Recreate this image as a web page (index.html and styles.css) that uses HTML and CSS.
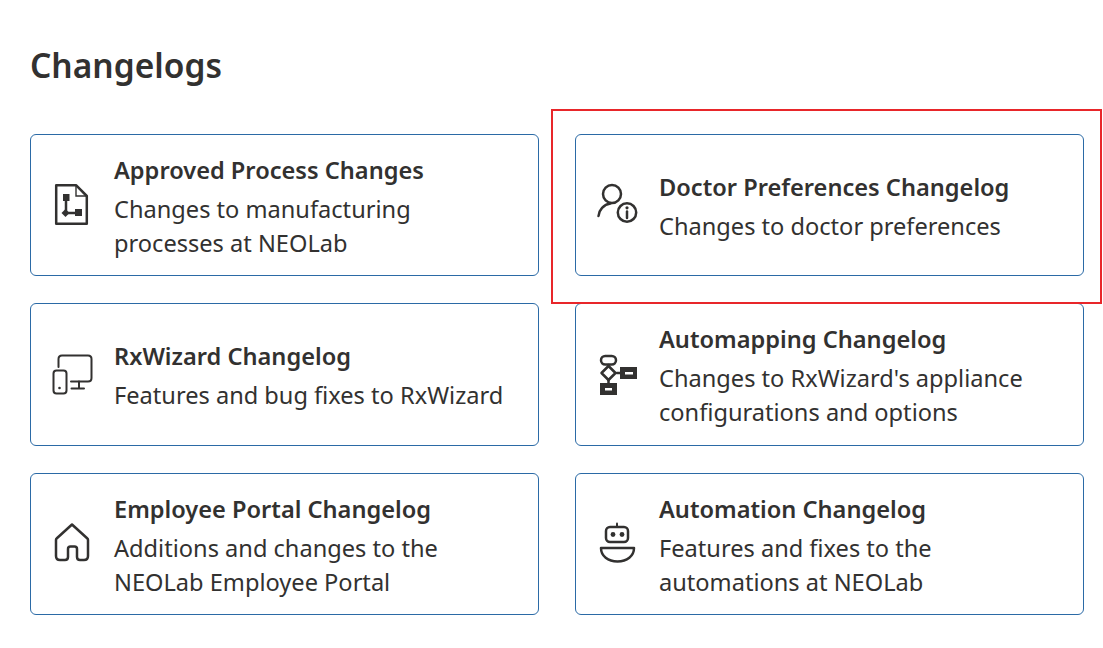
FILE: index.html
```html
<!DOCTYPE html>
<html>
<head>
<meta charset="UTF-8">
<title>Changelogs</title>
<link rel="stylesheet" href="styles.css">
</head>
<body>
	<h1 class="page-title">Changelogs</h1>

	<div class="card-grid">
		<a class="card">
			<svg class="card-icon" viewBox="0 0 42 44">
				<path class="line" d="M5.2 2.2H25L35.8 13V40.8H5.2Z"/>
				<path class="hair" d="M25 3V13H35"/>
				<path class="line" d="M15 16V30H26"/>
				<rect class="fill" x="12" y="11" width="6.5" height="7"/>
				<rect class="fill" x="24" y="26" width="7" height="7"/>
				<path class="fill" d="M14.5 26L18.5 30L14.5 34L10.5 30Z"/>
			</svg>
			<div class="card-text">
				<div class="card-title">Approved Process Changes</div>
				<div class="card-desc">Changes to manufacturing processes at NEOLab</div>
			</div>
		</a>

		<a class="card">
			<svg class="card-icon" viewBox="0 0 42 44">
				<circle class="line" cx="16" cy="11" r="9"/>
				<path class="line" d="M2.5 33C3 27 7.5 21.5 14.5 20.5"/>
				<circle class="line" cx="31" cy="29.5" r="9.2"/>
				<path class="line" d="M31 28.5V35"/>
				<circle class="fill" cx="31" cy="24.8" r="1.6"/>
			</svg>
			<div class="card-text">
				<div class="card-title">Doctor Preferences Changelog</div>
				<div class="card-desc">Changes to doctor preferences</div>
			</div>
		</a>

		<a class="card">
			<svg class="card-icon" viewBox="0 0 42 44">
				<path class="thin" d="M7.5 14V6Q7.5 2.5 11 2.5H37Q40.5 2.5 40.5 6V25Q40.5 28.5 37 28.5H20"/>
				<path class="thin" d="M28 28.5V35M20.5 35.5H33"/>
				<rect class="thin" x="2.5" y="17.5" width="13" height="23" rx="3"/>
				<circle class="fill" cx="8.5" cy="35" r="1.3"/>
			</svg>
			<div class="card-text">
				<div class="card-title">RxWizard Changelog</div>
				<div class="card-desc">Features and bug fixes to RxWizard</div>
			</div>
		</a>

		<a class="card">
			<svg class="card-icon" viewBox="0 0 42 44">
				<rect class="line" x="5" y="3" width="15" height="8.5" rx="4.2"/>
				<path class="line" d="M12.5 12V13M12.5 27V30M21 20H24"/>
				<path class="line" d="M12.5 13L19.5 20L12.5 27L5.5 20Z"/>
				<path class="fill hollow" d="M24 14H41V26H24ZM29 19V21.5H37V19Z"/>
				<path class="fill hollow" d="M4 30H21V42H4ZM9 35V37.5H16V35Z"/>
			</svg>
			<div class="card-text">
				<div class="card-title">Automapping Changelog</div>
				<div class="card-desc">Changes to RxWizard's appliance configurations and options</div>
			</div>
		</a>

		<a class="card">
			<svg class="card-icon" viewBox="0 0 42 44">
				<path class="line" d="M21 2.5L36.4 16.5Q37 17 37 18V34Q37 38 33 38H29Q26 38 26 35V27Q26 24.5 23.5 24.5H19.5Q17 24.5 17 27V35Q17 38 14 38H9Q5 38 5 34V18Q5 17 5.6 16.5Z"/>
			</svg>
			<div class="card-text">
				<div class="card-title">Employee Portal Changelog</div>
				<div class="card-desc">Additions and changes to the NEOLab Employee Portal</div>
			</div>
		</a>

		<a class="card">
			<svg class="card-icon" viewBox="0 0 42 44">
				<path class="thin" d="M21 1.5V4"/>
				<rect class="line" x="10" y="5" width="22" height="15" rx="4"/>
				<circle class="fill" cx="17" cy="12.5" r="2.4"/>
				<circle class="fill" cx="26" cy="12.5" r="2.4"/>
				<path class="line" d="M5 26H38C38 34 31 39.5 21.5 39.5C12 39.5 5 34 5 26Z"/>
			</svg>
			<div class="card-text">
				<div class="card-title">Automation Changelog</div>
				<div class="card-desc">Features and fixes to the automations at NEOLab</div>
			</div>
		</a>
	</div>

	<!-- red box from the annotated screenshot -->
	<div class="highlight"></div>
</body>
</html>
```

FILE: styles.css
```css
body {
	margin: 0;
	padding: 0 19px 0 30px;
	font-family: "Noto Sans", "Open Sans", sans-serif;
	color: #323130;
	background: #fff;
}

.page-title {
	margin: 0;
	padding-top: 41px;
	font-size: 33.5px;
	line-height: 48px;
	font-weight: 600;
}

.card-grid {
	display: grid;
	grid-template-columns: 509px 509px;
	grid-template-rows: 142px 143px 142px;
	column-gap: 36px;
	row-gap: 27px;
	margin-top: 45px;
}

.card {
	display: flex;
	align-items: center;
	gap: 21px;
	padding: 0 20px;
	border: 1px solid #2b6aa6;
	border-radius: 6px;
}

.card-icon {
	flex: none;
	width: 42px;
	height: 44px;
}

.card-icon .line {
	fill: none;
	stroke: #323130;
	stroke-width: 2.5;
	stroke-linejoin: round;
	stroke-linecap: round;
}

.card-icon .thin {
	fill: none;
	stroke: #323130;
	stroke-width: 2;
	stroke-linecap: round;
	stroke-linejoin: round;
}

.card-icon .hair {
	fill: none;
	stroke: #323130;
	stroke-width: 1.4;
}

.card-icon .fill {
	fill: #323130;
}

.card-icon .hollow {
	fill-rule: evenodd;
}

.card-text {
	padding-top: 2px;
}

.card-title {
	font-size: 23.6px;
	line-height: 34px;
	font-weight: 600;
	margin-bottom: 5px;
}

.card-desc {
	font-size: 23.6px;
	line-height: 34px;
}

.highlight {
	position: absolute;
	left: 551px;
	top: 109px;
	width: 547px;
	height: 191px;
	border: 2px solid #e8262a;
}
```
